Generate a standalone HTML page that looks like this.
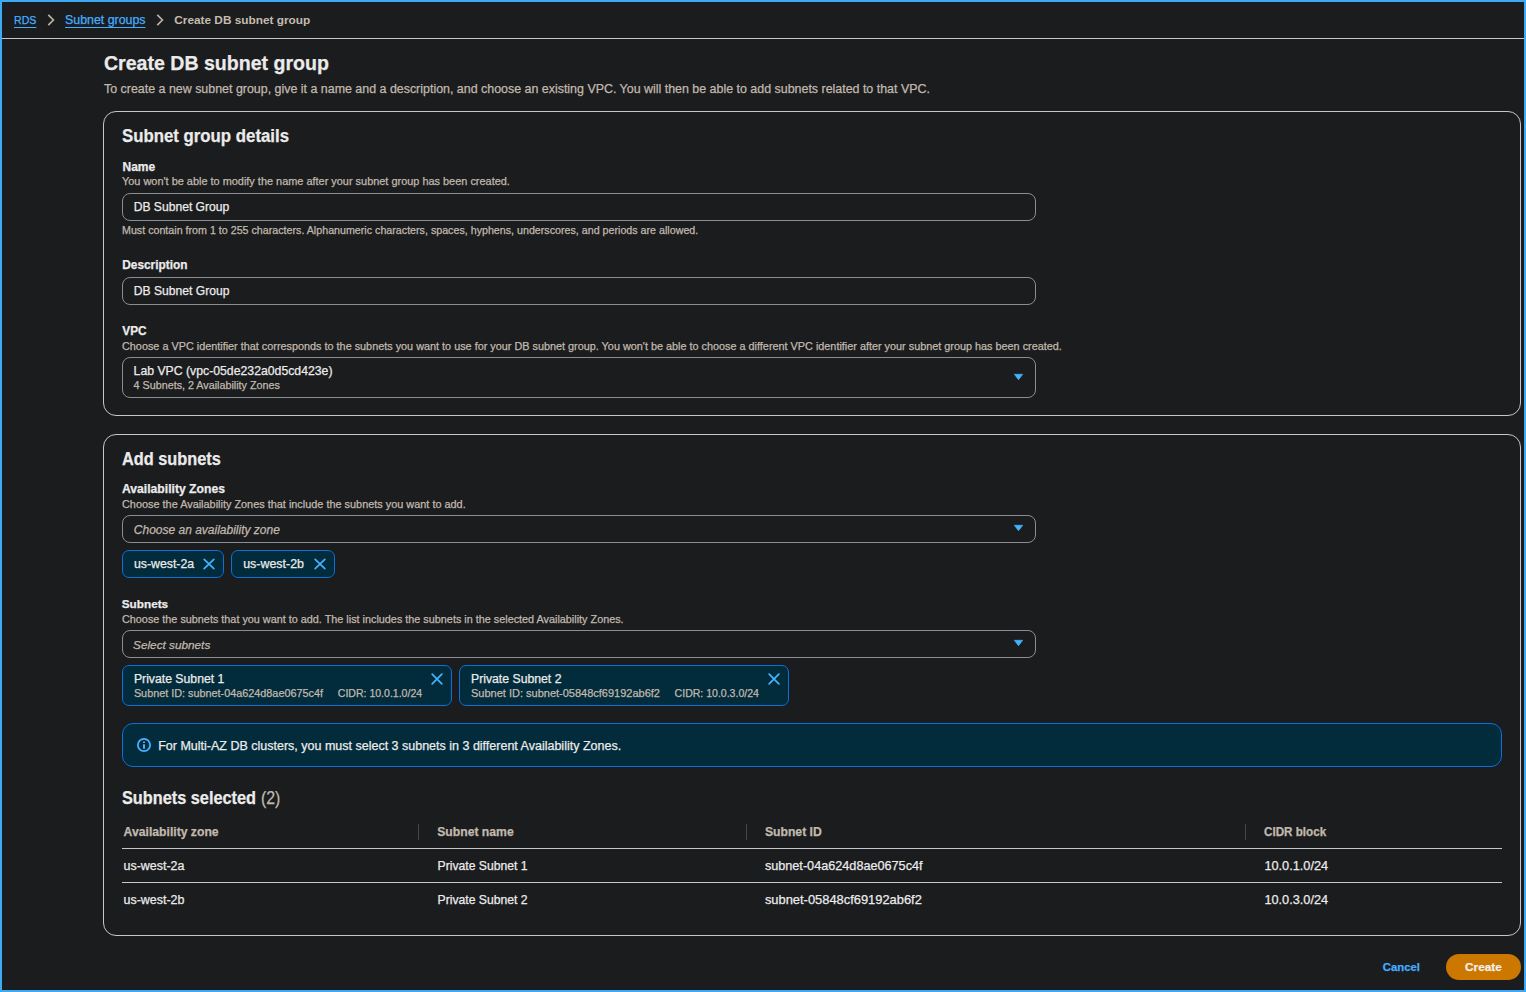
<!DOCTYPE html>
<html><head><meta charset="utf-8">
<style>
*{box-sizing:border-box;margin:0;padding:0}
html,body{width:1526px;height:992px;overflow:hidden}
body{background:#1b1c1e;font-family:"Liberation Sans",sans-serif;position:relative}
.frame{position:absolute;left:0;top:0;width:1526px;height:992px;border:2px solid #3fa9f5;z-index:10}
.t{position:absolute;white-space:nowrap;line-height:1;-webkit-text-stroke:0.25px currentColor}
.box{position:absolute}
.ic{position:absolute;overflow:visible}
</style></head><body>
<div class="frame"></div>
<svg class="ic" style="left:45.8px;top:13px" width="10" height="14" viewBox="0 0 10 14"><path d="M2.3 1.8 L7.4 7 L2.3 12.2" fill="none" stroke="#bab2a5" stroke-width="1.7"/></svg>
<svg class="ic" style="left:154.8px;top:13px" width="10" height="14" viewBox="0 0 10 14"><path d="M2.3 1.8 L7.4 7 L2.3 12.2" fill="none" stroke="#bab2a5" stroke-width="1.7"/></svg>
<div class="box" style="left:2px;top:38px;width:1522px;height:1px;background:#c6c6cd"></div>
<div class="box" style="left:103px;top:111px;width:1418px;height:305px;border:1px solid #c6c6cd;border-radius:13px"></div>
<div class="box" style="left:103px;top:434px;width:1418px;height:502px;border:1px solid #c6c6cd;border-radius:13px"></div>
<div class="box" style="left:122px;top:193px;width:914px;height:28px;border:1px solid #8c8c94;border-radius:8px"></div>
<div class="box" style="left:122px;top:277px;width:914px;height:28px;border:1px solid #8c8c94;border-radius:8px"></div>
<div class="box" style="left:122px;top:357px;width:914px;height:41px;border:1px solid #8c8c94;border-radius:8px"></div>
<div class="box" style="left:122px;top:515px;width:914px;height:28px;border:1px solid #8c8c94;border-radius:8px"></div>
<div class="box" style="left:122px;top:630px;width:914px;height:28px;border:1px solid #8c8c94;border-radius:8px"></div>
<svg class="ic" style="left:1012.7px;top:373.4px" width="12" height="10" viewBox="0 0 12 10"><path d="M1.3 1.3 L9.7 1.3 L5.5 6.7 Z" fill="#42b4ff" stroke="#42b4ff" stroke-width="0.7" stroke-linejoin="round"/></svg>
<svg class="ic" style="left:1012.7px;top:524.4px" width="12" height="10" viewBox="0 0 12 10"><path d="M1.3 1.3 L9.7 1.3 L5.5 6.7 Z" fill="#42b4ff" stroke="#42b4ff" stroke-width="0.7" stroke-linejoin="round"/></svg>
<svg class="ic" style="left:1012.7px;top:639.4px" width="12" height="10" viewBox="0 0 12 10"><path d="M1.3 1.3 L9.7 1.3 L5.5 6.7 Z" fill="#42b4ff" stroke="#42b4ff" stroke-width="0.7" stroke-linejoin="round"/></svg>
<div class="box" style="left:122px;top:550px;width:102px;height:28px;background:#022b3b;border:1px solid #0b6fdc;border-radius:7px"></div>
<div class="box" style="left:231px;top:550px;width:104px;height:28px;background:#022b3b;border:1px solid #0b6fdc;border-radius:7px"></div>
<svg class="ic" style="left:201.05px;top:556.00px" width="16" height="16" viewBox="0 0 16 16"><path d="M3.1500000000000004 3.3 L12.85 12.7 M12.85 3.3 L3.1500000000000004 12.7" stroke="#42b4ff" stroke-width="1.7" stroke-linecap="round" fill="none"/></svg>
<svg class="ic" style="left:311.90px;top:556.00px" width="16" height="16" viewBox="0 0 16 16"><path d="M3.1500000000000004 3.3 L12.85 12.7 M12.85 3.3 L3.1500000000000004 12.7" stroke="#42b4ff" stroke-width="1.7" stroke-linecap="round" fill="none"/></svg>
<div class="box" style="left:122px;top:665px;width:330px;height:41px;background:#022b3b;border:1px solid #0b6fdc;border-radius:7px"></div>
<div class="box" style="left:459px;top:665px;width:330px;height:41px;background:#022b3b;border:1px solid #0b6fdc;border-radius:7px"></div>
<svg class="ic" style="left:429.00px;top:671.00px" width="16" height="16" viewBox="0 0 16 16"><path d="M3.1500000000000004 3.0999999999999996 L12.85 12.9 M12.85 3.0999999999999996 L3.1500000000000004 12.9" stroke="#42b4ff" stroke-width="1.7" stroke-linecap="round" fill="none"/></svg>
<svg class="ic" style="left:766.00px;top:671.00px" width="16" height="16" viewBox="0 0 16 16"><path d="M3.1500000000000004 3.0999999999999996 L12.85 12.9 M12.85 3.0999999999999996 L3.1500000000000004 12.9" stroke="#42b4ff" stroke-width="1.7" stroke-linecap="round" fill="none"/></svg>
<div class="box" style="left:122px;top:723px;width:1380px;height:44px;background:#022b3b;border:1px solid #0b6fdc;border-radius:11px"></div>
<svg class="ic" style="left:136px;top:737px" width="16" height="16" viewBox="0 0 16 16"><circle cx="8" cy="8" r="6.1" fill="none" stroke="#42b4ff" stroke-width="1.8"/><path d="M8 7.2 V11.8" stroke="#42b4ff" stroke-width="2"/><path d="M8 4.6 V6" stroke="#42b4ff" stroke-width="2"/></svg>
<div class="box" style="left:418px;top:824px;width:1px;height:16px;background:#45454a"></div>
<div class="box" style="left:746px;top:824px;width:1px;height:16px;background:#45454a"></div>
<div class="box" style="left:1245px;top:824px;width:1px;height:16px;background:#45454a"></div>
<div class="box" style="left:122px;top:848px;width:1380px;height:1px;background:#c6c6cd"></div>
<div class="box" style="left:122px;top:882px;width:1380px;height:1px;background:#c6c6cd"></div>
<div class="box" style="left:1446px;top:954px;width:75px;height:26px;background:#cc7700;border-radius:13px"></div>
<div class="t" id="t0" style="left:14px;top:15.21px;font-size:10.6px;font-weight:400;font-style:normal;color:#42aeff;text-decoration:underline;text-underline-offset:2.5px">RDS</div>
<div class="t" id="t1" style="left:65px;top:14.21px;font-size:12.39px;font-weight:400;font-style:normal;color:#42aeff;text-decoration:underline;text-underline-offset:2.5px">Subnet groups</div>
<div class="t" id="t2" style="left:174.3px;top:15.00px;font-size:11.82px;font-weight:700;font-style:normal;color:#c4bcb0;-webkit-text-stroke:0">Create DB subnet group</div>
<div class="t" id="t3" style="left:104px;top:53.21px;font-size:20.5px;font-weight:700;font-style:normal;color:#ebebeb;transform:scaleX(0.9537);transform-origin:0 0">Create DB subnet group</div>
<div class="t" id="t4" style="left:104px;top:83.01px;font-size:12.43px;font-weight:400;font-style:normal;color:#c0b9ae;">To create a new subnet group, give it a name and a description, and choose an existing VPC. You will then be able to add subnets related to that VPC.</div>
<div class="t" id="t5" style="left:122px;top:126.72px;font-size:18px;font-weight:700;font-style:normal;color:#ebebeb;transform:scaleX(0.9328);transform-origin:0 0">Subnet group details</div>
<div class="t" id="t6" style="left:122.5px;top:161.01px;font-size:12.0px;font-weight:700;font-style:normal;color:#ebebeb;">Name</div>
<div class="t" id="t7" style="left:122px;top:175.92px;font-size:10.93px;font-weight:400;font-style:normal;color:#c0b9ae;">You won&#39;t be able to modify the name after your subnet group has been created.</div>
<div class="t" id="t8" style="left:133.7px;top:201.10px;font-size:12.12px;font-weight:400;font-style:normal;color:#ebebeb;">DB Subnet Group</div>
<div class="t" id="t9" style="left:122px;top:225.00px;font-size:10.7px;font-weight:400;font-style:normal;color:#c0b9ae;">Must contain from 1 to 255 characters. Alphanumeric characters, spaces, hyphens, underscores, and periods are allowed.</div>
<div class="t" id="t10" style="left:122.3px;top:260.00px;font-size:11.85px;font-weight:700;font-style:normal;color:#ebebeb;">Description</div>
<div class="t" id="t11" style="left:133.8px;top:285.01px;font-size:12.12px;font-weight:400;font-style:normal;color:#ebebeb;">DB Subnet Group</div>
<div class="t" id="t12" style="left:122.3px;top:326.31px;font-size:11.85px;font-weight:700;font-style:normal;color:#ebebeb;">VPC</div>
<div class="t" id="t13" style="left:122px;top:340.91px;font-size:10.85px;font-weight:400;font-style:normal;color:#c0b9ae;">Choose a VPC identifier that corresponds to the subnets you want to use for your DB subnet group. You won&#39;t be able to choose a different VPC identifier after your subnet group has been created.</div>
<div class="t" id="t14" style="left:133.6px;top:365.01px;font-size:12.25px;font-weight:400;font-style:normal;color:#ebebeb;">Lab VPC (vpc-05de232a0d5cd423e)</div>
<div class="t" id="t15" style="left:133.6px;top:379.92px;font-size:10.75px;font-weight:400;font-style:normal;color:#c0b9ae;">4 Subnets, 2 Availability Zones</div>
<div class="t" id="t16" style="left:122px;top:450.11px;font-size:18px;font-weight:700;font-style:normal;color:#ebebeb;transform:scaleX(0.9061);transform-origin:0 0">Add subnets</div>
<div class="t" id="t17" style="left:122px;top:482.92px;font-size:12.17px;font-weight:700;font-style:normal;color:#ebebeb;">Availability Zones</div>
<div class="t" id="t18" style="left:122px;top:498.91px;font-size:10.9px;font-weight:400;font-style:normal;color:#c0b9ae;">Choose the Availability Zones that include the subnets you want to add.</div>
<div class="t" id="t19" style="left:133.8px;top:523.82px;font-size:12.01px;font-weight:400;font-style:italic;color:#c0b9ae;">Choose an availability zone</div>
<div class="t" id="t20" style="left:133.9px;top:557.91px;font-size:12.33px;font-weight:400;font-style:normal;color:#ebebeb;">us-west-2a</div>
<div class="t" id="t21" style="left:243.2px;top:557.91px;font-size:12.45px;font-weight:400;font-style:normal;color:#ebebeb;">us-west-2b</div>
<div class="t" id="t22" style="left:121.8px;top:598.11px;font-size:11.74px;font-weight:700;font-style:normal;color:#ebebeb;">Subnets</div>
<div class="t" id="t23" style="left:122px;top:613.92px;font-size:10.84px;font-weight:400;font-style:normal;color:#c0b9ae;">Choose the subnets that you want to add. The list includes the subnets in the selected Availability Zones.</div>
<div class="t" id="t24" style="left:133.1px;top:638.82px;font-size:11.77px;font-weight:400;font-style:italic;color:#c0b9ae;">Select subnets</div>
<div class="t" id="t25" style="left:133.9px;top:672.81px;font-size:12.24px;font-weight:400;font-style:normal;color:#ebebeb;">Private Subnet 1</div>
<div class="t" id="t26" style="left:133.9px;top:688.01px;font-size:10.84px;font-weight:400;font-style:normal;color:#c0b9ae;">Subnet ID: subnet-04a624d8ae0675c4f</div>
<div class="t" id="t27" style="left:337.8px;top:687.91px;font-size:10.54px;font-weight:400;font-style:normal;color:#c0b9ae;">CIDR: 10.0.1.0/24</div>
<div class="t" id="t28" style="left:471px;top:672.81px;font-size:12.24px;font-weight:400;font-style:normal;color:#ebebeb;">Private Subnet 2</div>
<div class="t" id="t29" style="left:471px;top:688.00px;font-size:11.0px;font-weight:400;font-style:normal;color:#c0b9ae;">Subnet ID: subnet-05848cf69192ab6f2</div>
<div class="t" id="t30" style="left:674.6px;top:687.91px;font-size:10.54px;font-weight:400;font-style:normal;color:#c0b9ae;">CIDR: 10.0.3.0/24</div>
<div class="t" id="t31" style="left:158.2px;top:740.00px;font-size:12.51px;font-weight:400;font-style:normal;color:#ebebeb;">For Multi-AZ DB clusters, you must select 3 subnets in 3 different Availability Zones.</div>
<div class="t" id="t32" style="left:122.2px;top:788.81px;font-size:18px;font-weight:700;font-style:normal;color:#ebebeb;transform:scaleX(0.905);transform-origin:0 0">Subnets selected</div>
<div class="t" id="t33" style="left:261.3px;top:789.81px;font-size:17.5px;font-weight:400;font-style:normal;color:#c0b9ae;transform:scaleX(0.907);transform-origin:0 0">(2)</div>
<div class="t" id="t34" style="left:123.6px;top:825.81px;font-size:12.2px;font-weight:700;font-style:normal;color:#c0b9ae;">Availability zone</div>
<div class="t" id="t35" style="left:437.2px;top:825.81px;font-size:12.2px;font-weight:700;font-style:normal;color:#c0b9ae;">Subnet name</div>
<div class="t" id="t36" style="left:764.9px;top:825.81px;font-size:12.2px;font-weight:700;font-style:normal;color:#c0b9ae;">Subnet ID</div>
<div class="t" id="t37" style="left:1263.8px;top:825.81px;font-size:12.2px;font-weight:700;font-style:normal;color:#c0b9ae;transform:scaleX(0.957);transform-origin:0 0">CIDR block</div>
<div class="t" id="t38" style="left:123.6px;top:860.01px;font-size:12.45px;font-weight:400;font-style:normal;color:#ebebeb;">us-west-2a</div>
<div class="t" id="t39" style="left:437.5px;top:860.00px;font-size:12.2px;font-weight:400;font-style:normal;color:#ebebeb;">Private Subnet 1</div>
<div class="t" id="t40" style="left:764.9px;top:860.00px;font-size:12.66px;font-weight:400;font-style:normal;color:#ebebeb;">subnet-04a624d8ae0675c4f</div>
<div class="t" id="t41" style="left:1264.4px;top:860.01px;font-size:12.74px;font-weight:400;font-style:normal;color:#ebebeb;">10.0.1.0/24</div>
<div class="t" id="t42" style="left:123.6px;top:894.10px;font-size:12.45px;font-weight:400;font-style:normal;color:#ebebeb;">us-west-2b</div>
<div class="t" id="t43" style="left:437.5px;top:894.11px;font-size:12.2px;font-weight:400;font-style:normal;color:#ebebeb;">Private Subnet 2</div>
<div class="t" id="t44" style="left:764.9px;top:894.11px;font-size:12.9px;font-weight:400;font-style:normal;color:#ebebeb;">subnet-05848cf69192ab6f2</div>
<div class="t" id="t45" style="left:1264.4px;top:894.11px;font-size:12.74px;font-weight:400;font-style:normal;color:#ebebeb;">10.0.3.0/24</div>
<div class="t" id="t46" style="left:1382.8px;top:962.11px;font-size:11.31px;font-weight:700;font-style:normal;color:#42aeff;">Cancel</div>
<div class="t" id="t47" style="left:1465.1px;top:961.00px;font-size:11.76px;font-weight:700;font-style:normal;color:#f2f0ec;">Create</div>
</body></html>
